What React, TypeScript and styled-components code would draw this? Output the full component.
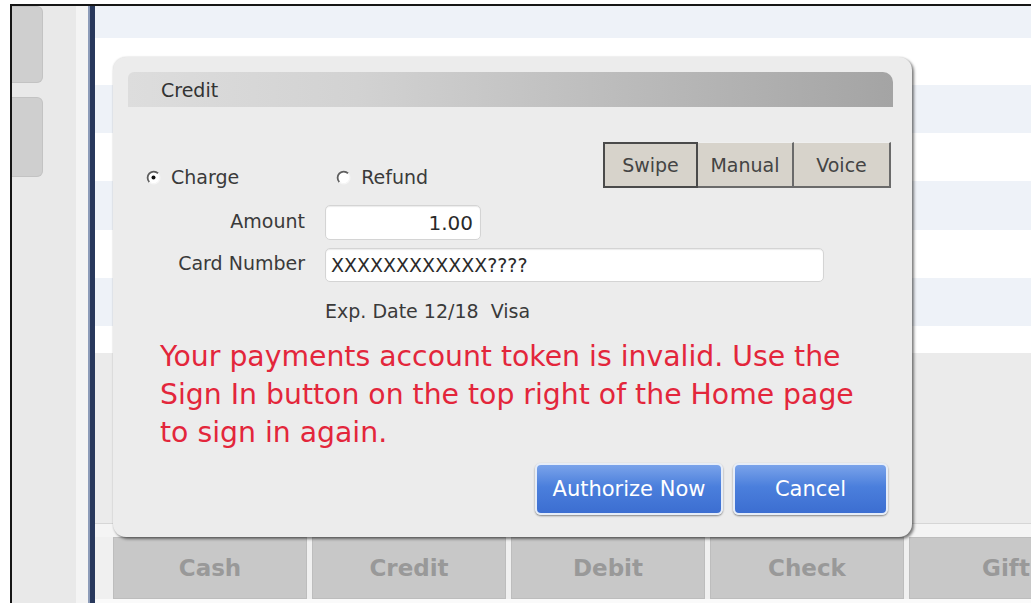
import React from "react";
import styled, { createGlobalStyle } from "styled-components";

const GlobalStyle = createGlobalStyle`
  html, body {
    margin: 0;
    padding: 0;
    background: #ffffff;
  }

  body {
    font-family: "DejaVu Sans", Verdana, sans-serif;
  }
`;

const Screen = styled.div`
  width: 1031px;
  height: 603px;
  box-sizing: border-box;
  padding: 4px 0 0 10px;
  overflow: hidden;
  background: #ffffff;
`;

const Frame = styled.div`
  display: flex;
  height: 100%;
  border-top: 2px solid #161616;
  border-left: 2px solid #161616;
`;

const Sidebar = styled.div`
  width: 76px;
  display: flex;
  background: #e9e9e9;
`;

const SideButtons = styled.div`
  width: 31px;
  display: flex;
  flex-direction: column;
  gap: 14px;
`;

const SideButton = styled.div<{ $h: number }>`
  height: ${(p) => p.$h}px;
  box-sizing: border-box;
  background: #cfcfcf;
  border: 1px solid #c3c3c3;
  border-left: none;
  border-radius: 0 6px 6px 0;
`;

const SideStrip = styled.div`
  width: 12px;
  margin-left: auto;
  background: #f4f4f4;
`;

const Divider = styled.div`
  width: 5px;
  background: #28385c;
  border-left: 2px solid #8d9cb9;
`;

const Main = styled.div`
  position: relative;
  flex: 1;
  display: flex;
  flex-direction: column;
  min-width: 0;
`;

const Rows = styled.div`
  display: flex;
  flex-direction: column;
`;

const Row = styled.div<{ $h: number; $alt: boolean }>`
  height: ${(p) => p.$h}px;
  background: ${(p) => (p.$alt ? "#eef2f8" : "#ffffff")};
`;

const Panel = styled.div`
  flex: 1;
  background: #ebebeb;
`;

const PanelFoot = styled.div`
  height: 13px;
  background: #f4f4f4;
  border-top: 1px solid #d6d6d6;
`;

const PayBar = styled.div`
  height: 62px;
  display: flex;
  gap: 5px;
  padding-left: 18px;
  background: #f0f0f0;
`;

const PayButton = styled.div`
  flex: 0 0 194px;
  box-sizing: border-box;
  display: flex;
  align-items: center;
  justify-content: center;
  background: #c8c8c8;
  border: 1px solid #bdbdbd;
  color: #999999;
  font-size: 23px;
  font-weight: bold;
`;

const PageBottom = styled.div`
  height: 6px;
  background: #fafafa;
`;

/* modal */

const Dialog = styled.div`
  position: absolute;
  left: 18px;
  top: 51px;
  width: 799px;
  height: 480px;
  box-sizing: border-box;
  display: flex;
  flex-direction: column;
  padding: 15px 21px 22px 0;
  background: #ececec;
  border-radius: 13px;
  box-shadow: 2px 2px 3px rgba(0, 0, 0, 0.5), 0 0 2px rgba(0, 0, 0, 0.15);
  color: #3a3a3a;
  font-size: 19px;
`;

const TitleBar = styled.div`
  height: 35px;
  margin: 0 -2px 0 15px;
  display: flex;
  align-items: center;
  padding-left: 33px;
  background: linear-gradient(to right, #dddddd, #d2d2d2 30%, #a4a4a4);
  border-radius: 6px 10px 0 0;
  color: #333333;
`;

const TopRow = styled.div`
  height: 46px;
  margin-top: 35px;
  display: flex;
  align-items: flex-end;
  padding-left: 33px;
`;

const RadioGroup = styled.div`
  display: flex;
  gap: 97px;
  height: 22px;
`;

const RadioItem = styled.label`
  display: flex;
  align-items: center;
  gap: 10px;
  line-height: 22px;
`;

const Segments = styled.div`
  margin-left: auto;
  display: flex;
  height: 46px;
`;

const Segment = styled.div<{ $w: number; $active?: boolean }>`
  width: ${(p) => p.$w}px;
  box-sizing: border-box;
  display: flex;
  align-items: center;
  justify-content: center;
  background: #d7d3cb;
  color: #444444;
  border-top: ${(p) => (p.$active ? "2px solid #4a4a4a" : "1px solid #efefef")};
  border-left: ${(p) => (p.$active ? "2px solid #4a4a4a" : "none")};
  border-right: 2px solid ${(p) => (p.$active ? "#4a4a4a" : "#6a6a6a")};
  border-bottom: 2px solid ${(p) => (p.$active ? "#4a4a4a" : "#6a6a6a")};
`;

const Form = styled.div`
  margin-top: 17px;
  display: grid;
  grid-template-columns: 192px 1fr;
  column-gap: 20px;
  row-gap: 8px;
  align-items: center;
`;

const FieldLabel = styled.div`
  text-align: right;
  margin-top: -4px;
`;

const Field = styled.div<{ $w: number; $h: number; $right?: boolean }>`
  width: ${(p) => p.$w}px;
  height: ${(p) => p.$h}px;
  box-sizing: border-box;
  display: flex;
  align-items: center;
  justify-content: ${(p) => (p.$right ? "flex-end" : "flex-start")};
  padding: 0 7px 0 5px;
  background: #ffffff;
  border: 1px solid #d4d4d4;
  border-radius: 5px;
  box-shadow: inset 0 1px 1px rgba(0, 0, 0, 0.08);
  color: #2a2a2a;
  font-size: ${(p) => (p.$right ? 20 : 19)}px;
`;

const CardMeta = styled.div`
  grid-column: 2;
  margin-top: 10px;
  line-height: 22px;
  white-space: pre;
`;

const ErrorText = styled.p`
  margin: 16px 0 0 47px;
  width: 715px;
  color: #e3263b;
  font-size: 28.3px;
  line-height: 38px;
`;

const Actions = styled.div`
  margin-top: auto;
  display: flex;
  justify-content: flex-end;
  gap: 10px;
  padding-right: 3px;
`;

const ActionButton = styled.button<{ $w: number }>`
  width: ${(p) => p.$w}px;
  height: 52px;
  box-sizing: border-box;
  border: 2px solid #e6edf8;
  border-radius: 6px;
  background: linear-gradient(#7aa3ea, #4b7fdc 45%, #3c6ed1);
  box-shadow: 0 1px 2px rgba(0, 0, 0, 0.45);
  color: #ffffff;
  font-family: "DejaVu Sans", Verdana, sans-serif;
  font-size: 21px;
  cursor: pointer;
`;

// classic sunken radio: dark arc on the upper left, light on the lower right
const RadioMark = ({ checked }: { checked?: boolean }) => (
  <svg width="15" height="15" viewBox="0 0 15 15">
    <circle cx="7.5" cy="7.5" r="6" fill="#ffffff" />
    <path
      d="M12.1 3.4 A6 6 0 0 0 3.4 12.1"
      fill="none"
      stroke="#5e5e5e"
      strokeWidth="1.8"
    />
    <path
      d="M3.4 12.1 A6 6 0 0 0 12.1 3.4"
      fill="none"
      stroke="#f6f6f6"
      strokeWidth="1.4"
    />
    {checked && <circle cx="7.5" cy="7.5" r="2" fill="#111111" />}
  </svg>
);

const rowHeights = [32, 47, 48, 48, 49, 48, 48, 27];
const payTypes = ["Cash", "Credit", "Debit", "Check", "Gift"];

const App = () => {
  return (
    <>
      <GlobalStyle />
      <Screen>
        <Frame>
          <Sidebar>
            <SideButtons>
              <SideButton $h={77} />
              <SideButton $h={80} />
            </SideButtons>
            <SideStrip />
          </Sidebar>
          <Divider />
          <Main>
            <Rows>
              {rowHeights.map((h, i) => (
                <Row key={i} $h={h} $alt={i % 2 === 0} />
              ))}
            </Rows>
            <Panel />
            <PanelFoot />
            <PayBar>
              {payTypes.map((t) => (
                <PayButton key={t}>{t}</PayButton>
              ))}
            </PayBar>
            <PageBottom />

            <Dialog>
              <TitleBar>Credit</TitleBar>
              <TopRow>
                <RadioGroup>
                  <RadioItem>
                    <RadioMark checked />
                    Charge
                  </RadioItem>
                  <RadioItem>
                    <RadioMark />
                    Refund
                  </RadioItem>
                </RadioGroup>
                <Segments>
                  <Segment $w={95} $active>
                    Swipe
                  </Segment>
                  <Segment $w={96}>Manual</Segment>
                  <Segment $w={97}>Voice</Segment>
                </Segments>
              </TopRow>
              <Form>
                <FieldLabel>Amount</FieldLabel>
                <Field $w={156} $h={35} $right>
                  1.00
                </Field>
                <FieldLabel>Card Number</FieldLabel>
                <Field $w={499} $h={34}>
                  XXXXXXXXXXXX????
                </Field>
                <CardMeta>{"Exp. Date 12/18  Visa"}</CardMeta>
              </Form>
              <ErrorText>
                Your payments account token is invalid. Use the Sign In button
                on the top right of the Home page to sign in again.
              </ErrorText>
              <Actions>
                <ActionButton $w={188}>Authorize Now</ActionButton>
                <ActionButton $w={155}>Cancel</ActionButton>
              </Actions>
            </Dialog>
          </Main>
        </Frame>
      </Screen>
    </>
  );
};

export default App;
